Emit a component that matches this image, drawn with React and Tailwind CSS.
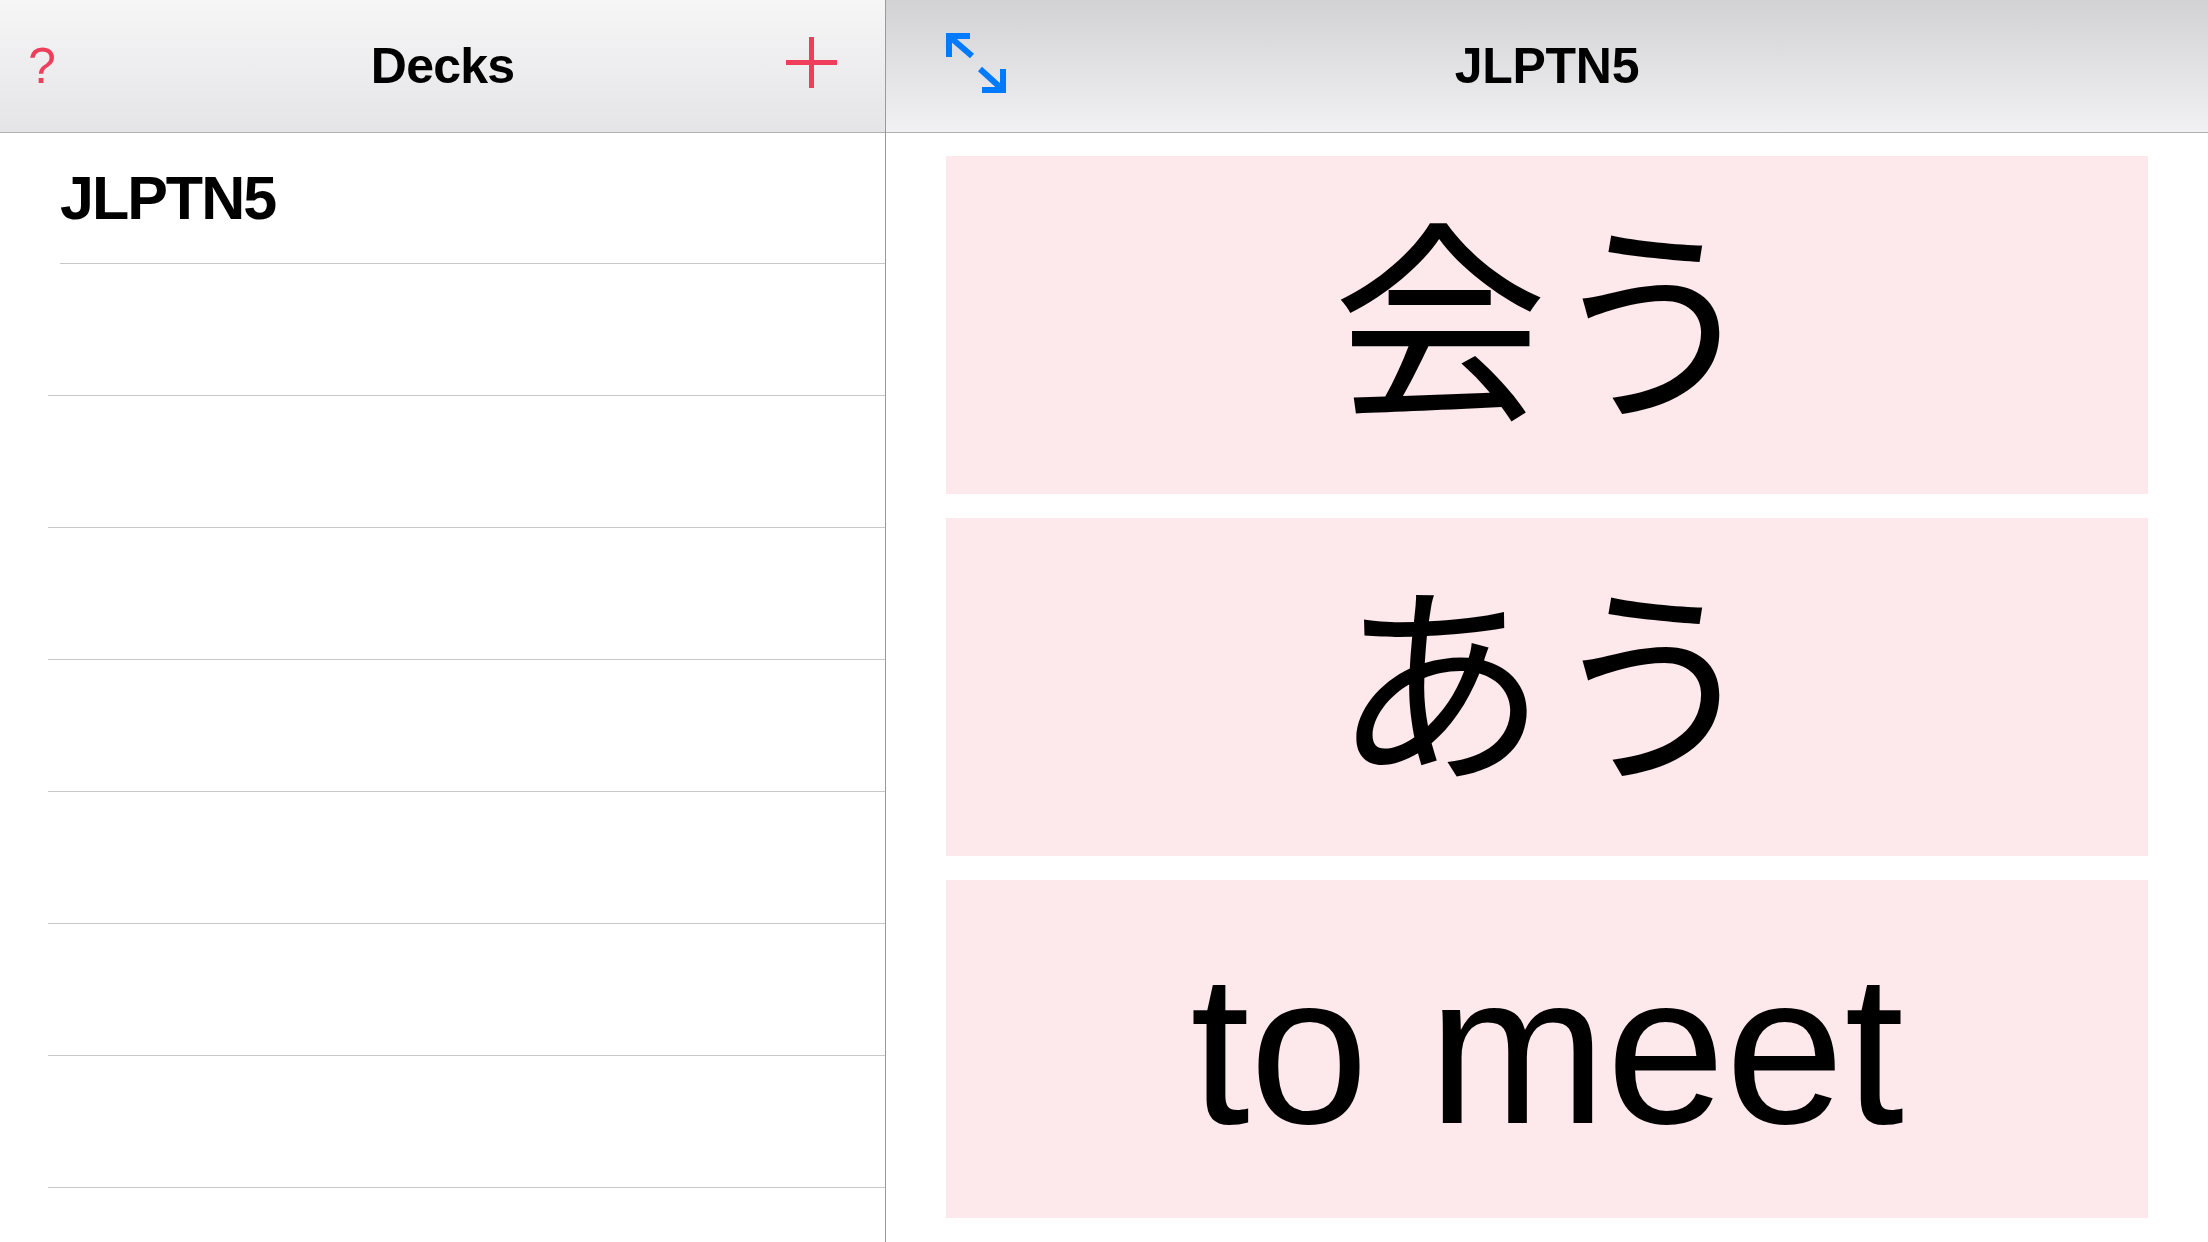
import React from 'react';

const cards = [
  { text: '会う', cjk: true },
  { text: 'あう', cjk: true },
  { text: 'to meet', cjk: false },
];

function ExpandIcon() {
  return (
    <svg width="60" height="60" viewBox="0 0 60 60" className="mb-[6px]">
      <path d="M0 0H24V6H6V24H0Z" fill="#007aff" />
      <line x1="4" y1="4" x2="26" y2="23" stroke="#007aff" strokeWidth="6" />
      <path d="M60 60H36V54H54V36H60Z" fill="#007aff" />
      <line x1="34" y1="36" x2="56" y2="56" stroke="#007aff" strokeWidth="6" />
    </svg>
  );
}

function PlusIcon() {
  return (
    <svg width="51" height="51" viewBox="0 0 51 51" className="mb-[7px]">
      <rect x="23" y="0" width="5" height="51" fill="#ef3e5c" />
      <rect x="0" y="23" width="51" height="5" fill="#ef3e5c" />
    </svg>
  );
}

export default function App() {
  // empty rows under the one deck
  const emptyRows = Array.from({ length: 7 });

  return (
    <div className="flex h-[1242px] w-[2208px] overflow-hidden bg-white font-['Liberation_Sans','Noto_Sans_CJK_JP',sans-serif] text-black">
      {/* Decks list */}
      <aside className="flex w-[886px] shrink-0 flex-col border-r border-[#9a9a9a]">
        <header className="grid h-[133px] shrink-0 grid-cols-[1fr_auto_1fr] items-center border-b border-[#b0b0b2] bg-gradient-to-b from-[#f6f6f7] to-[#e5e5e7]">
          <div className="flex items-center pl-[28px]">
            <span className="text-[50px] leading-none text-[#ef3e5c]">?</span>
          </div>
          <h1 className="text-[50px] font-bold leading-none tracking-[-0.8px]">Decks</h1>
          <div className="flex items-center justify-end pr-[48px]">
            <PlusIcon />
          </div>
        </header>
        <div className="flex h-[130px] items-center pl-[60px]">
          <span className="text-[61px] font-bold leading-none tracking-[-2px]">JLPTN5</span>
        </div>
        <div className="ml-[60px] h-px bg-[#c8c7cc]" />
        {emptyRows.map((_, i) => (
          <div key={i}>
            <div className="h-[131px]" />
            <div className="ml-[48px] h-px bg-[#c8c7cc]" />
          </div>
        ))}
      </aside>

      {/* Deck detail */}
      <main className="flex flex-1 flex-col">
        <header className="grid h-[133px] shrink-0 grid-cols-[1fr_auto_1fr] items-center border-b border-[#b0b0b2] bg-gradient-to-b from-[#d2d2d5] to-[#f1f1f3]">
          <div className="flex items-center pl-[60px]">
            <ExpandIcon />
          </div>
          <h2 className="text-[50px] font-bold leading-none tracking-[-0.3px]">JLPTN5</h2>
          <div />
        </header>
        <div className="flex flex-1 flex-col gap-[24px] px-[60px] pb-[24px] pt-[23px]">
          {cards.map(card => (
            <div key={card.text} className="flex flex-1 items-center justify-center bg-[#fde8eb]">
              <span className={`text-[214px] leading-none ${card.cjk ? 'mt-[8px]' : ''}`}>{card.text}</span>
            </div>
          ))}
        </div>
      </main>
    </div>
  );
}
